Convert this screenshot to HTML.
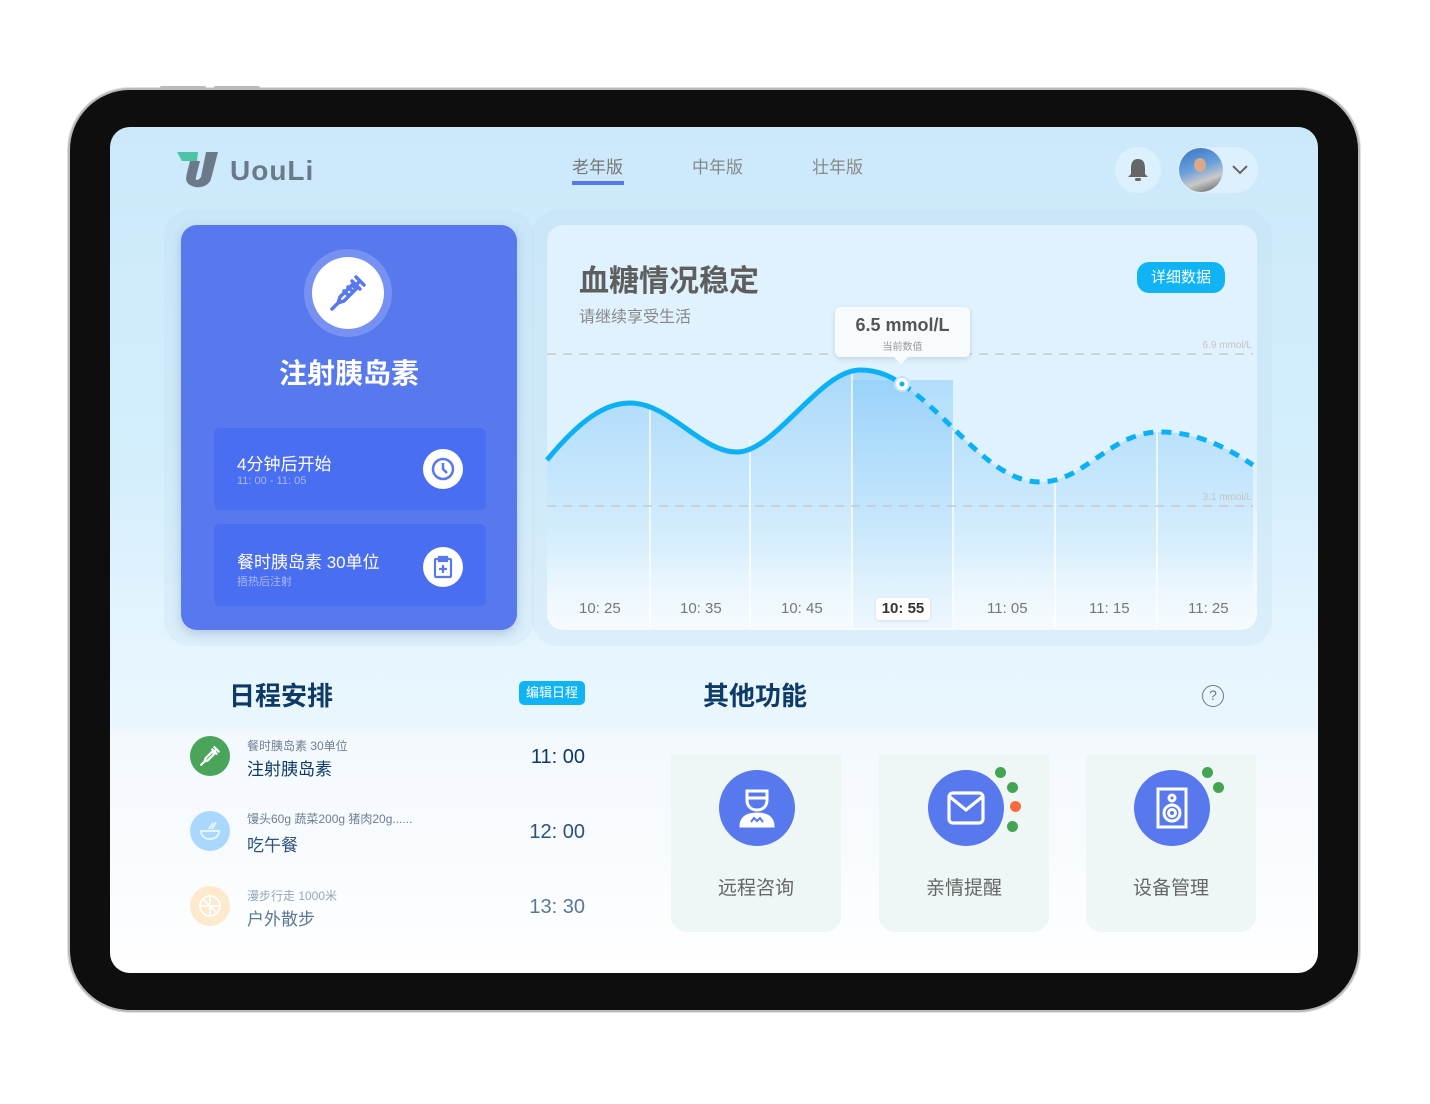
<!DOCTYPE html>
<html><head><meta charset="utf-8">
<style>
*{margin:0;padding:0;box-sizing:border-box}
body{width:1430px;height:1104px;background:#fff;position:relative;overflow:hidden;font-family:"Liberation Sans","Noto Sans CJK SC",sans-serif}
.abs{position:absolute}
.frame{left:68px;top:88px;width:1292px;height:924px;border-radius:62px;background:#0e0e0e;border:2px solid #b9b9b9;box-shadow:0 0 0 1px #e0e0e0}
.screen{left:110px;top:127px;width:1208px;height:846px;border-radius:20px;overflow:hidden;background:linear-gradient(#cbe9fb 0%,#d4eefc 40%,#e6f5fe 62%,#eaf6fe 71%,#f4f9fe 72%,#f8fbfe 85%,#fff 100%)}
.t{position:absolute;white-space:nowrap}
</style></head><body>
<div class="abs frame"></div>
<div class="abs" style="left:160px;top:86px;width:46px;height:3px;background:#bbb;border-radius:2px"></div>
<div class="abs" style="left:214px;top:86px;width:46px;height:3px;background:#bbb;border-radius:2px"></div>
<div class="abs screen"></div>

<svg class="abs" style="left:176px;top:151px" width="44" height="38" viewBox="0 0 44 38">
<path d="M1 1 H22 L21 10 H6 Z" fill="#4fc3a6"/>
<path d="M14 10 H24 L20 26 C19 30 22 30 25 26 L30 1 H42 L35 28 C32 37 20 38 14 34 C9 31 10 26 11 22 Z" fill="#6b7a8a"/>
</svg>
<div class="t" style="left:230px;top:155px;font-size:28px;font-weight:bold;color:#6b7a8a;letter-spacing:1px">UouLi</div>

<div class="t" style="left:572px;top:153px;font-size:17px;color:#777">老年版</div>
<div class="abs" style="left:572px;top:181px;width:52px;height:4px;background:#5878ee"></div>
<div class="t" style="left:692px;top:153px;font-size:17px;color:#888">中年版</div>
<div class="t" style="left:812px;top:153px;font-size:17px;color:#888">壮年版</div>

<div class="abs" style="left:1115px;top:147px;width:46px;height:46px;border-radius:50%;background:#ddf0fd"></div>
<svg class="abs" style="left:1126px;top:157px" width="24" height="26" viewBox="0 0 24 26"><path d="M12 2 C6 2 5 7 5 12 L5 17 L2 20 H22 L19 17 L19 12 C19 7 18 2 12 2Z" fill="#666"/><rect x="9" y="21" width="6" height="3" rx="1.5" fill="#666"/></svg>
<div class="abs" style="left:1178px;top:147px;width:80px;height:46px;border-radius:23px;background:#ddf0fd"></div>
<div class="abs" style="left:1179px;top:148px;width:44px;height:44px;border-radius:50%;background:linear-gradient(160deg,#3a74c4,#6aa0dc 45%,#c9c9c9 70%,#555)"></div>
<div class="abs" style="left:1194px;top:158px;width:12px;height:14px;border-radius:50%;background:#d9a98a"></div>
<svg class="abs" style="left:1231px;top:163px" width="18" height="12"><path d="M2 3 L9 10 L16 3" stroke="#666" stroke-width="2" fill="none"/></svg>

<div class="abs" style="left:164px;top:210px;width:370px;height:436px;border-radius:26px;background:rgba(190,220,240,.25)"></div>
<div class="abs" style="left:181px;top:225px;width:336px;height:405px;border-radius:16px;background:#5878ee;box-shadow:0 4px 10px rgba(60,90,160,.25)"></div>
<div class="abs" style="left:304px;top:249px;width:88px;height:88px;border-radius:50%;background:#7791f2"></div>
<div class="abs" style="left:312px;top:257px;width:72px;height:72px;border-radius:50%;background:#fff"></div>
<svg class="abs" style="left:328px;top:273px" width="40" height="40" viewBox="0 0 40 40" fill="none" stroke="#5878ee" stroke-width="3.5" stroke-linecap="round"><path d="M28 4 L36 12 M32 8 L26 14 M24 8 L32 16 M26 10 L12 24 L10 30 L16 28 L30 14 M12 28 L4 36 M16 18 L20 22 M20 14 L24 18"/></svg>
<div class="t" style="left:181px;width:336px;text-align:center;top:352px;font-size:28px;font-weight:bold;color:#fff">注射胰岛素</div>

<div class="abs" style="left:214px;top:428px;width:272px;height:82px;border-radius:6px;background:#4a6ef2"></div>
<div class="t" style="left:237px;top:450px;font-size:17px;color:#fff">4分钟后开始</div>
<div class="t" style="left:237px;top:475px;font-size:11px;color:#a9b9f5">11: 00 - 11: 05</div>
<div class="abs" style="left:423px;top:449px;width:40px;height:40px;border-radius:50%;background:#fff"></div>
<svg class="abs" style="left:431px;top:457px" width="24" height="24" viewBox="0 0 24 24" fill="none" stroke="#5878ee" stroke-width="2.5"><circle cx="12" cy="12" r="10"/><path d="M12 6 V12 L16 16"/></svg>

<div class="abs" style="left:214px;top:524px;width:272px;height:82px;border-radius:6px;background:#4a6ef2"></div>
<div class="t" style="left:237px;top:548px;font-size:17px;color:#fff">餐时胰岛素 30单位</div>
<div class="t" style="left:237px;top:573px;font-size:11px;color:#a9b9f5">捂热后注射</div>
<div class="abs" style="left:423px;top:547px;width:40px;height:40px;border-radius:50%;background:#fff"></div>
<svg class="abs" style="left:431px;top:555px" width="24" height="24" viewBox="0 0 24 24" fill="none" stroke="#5878ee" stroke-width="2.2"><rect x="4" y="4" width="16" height="18" rx="1"/><rect x="8" y="2" width="8" height="4" fill="#5878ee"/><path d="M12 10 V18 M8 14 H16"/></svg>

<div class="abs" style="left:532px;top:210px;width:740px;height:436px;border-radius:26px;background:rgba(190,220,240,.25)"></div>
<div class="abs" style="left:547px;top:225px;width:710px;height:405px;border-radius:16px;background:linear-gradient(#dff2fd 0%,#dff2fd 65%,#eef8fe 80%,#f5fafe 100%);overflow:hidden"></div>
<div class="t" style="left:579px;top:256px;font-size:30px;font-weight:bold;color:#5e5e5e">血糖情况稳定</div>
<div class="t" style="left:579px;top:303px;font-size:16px;color:#888">请继续享受生活</div>
<div class="abs" style="left:1137px;top:262px;width:88px;height:31px;border-radius:12px;background:#10b4f5;color:#fff;font-size:15px;text-align:center;line-height:31px">详细数据</div>

<svg class="abs" style="left:0;top:0" width="1430" height="1104">
<defs>
<linearGradient id="f" x1="0" y1="0" x2="0" y2="1"><stop offset="0" stop-color="#a8d8fa"/><stop offset="0.7" stop-color="#cbe9fc" stop-opacity=".6"/><stop offset="1" stop-color="#f3f9fe" stop-opacity="0"/></linearGradient>
<linearGradient id="h" x1="0" y1="0" x2="0" y2="1"><stop offset="0" stop-color="#8ccdfa"/><stop offset="1" stop-color="#e6f4fd"/></linearGradient>
</defs>
<path d="M547,460 C580,420 605,403 630,403 C670,403 700,452 737,452 C775,452 820,370 860,370 C880,370 893,378 902,384 C950,415 990,482 1040,482 C1085,482 1110,432 1160,432 C1200,432 1230,450 1253,465 L1253,628 L547,628 Z" fill="url(#f)"/>
<rect x="852" y="380" width="101" height="248" fill="url(#h)" opacity=".55"/>
<g stroke="#fff" stroke-width="1.5" opacity=".9"><line x1="650" y1="405" x2="650" y2="628"/><line x1="750" y1="440" x2="750" y2="628"/><line x1="852" y1="372" x2="852" y2="628"/><line x1="953" y1="430" x2="953" y2="628"/><line x1="1055" y1="475" x2="1055" y2="628"/><line x1="1157" y1="432" x2="1157" y2="628"/></g>
<g stroke="#c4c4c4" stroke-width="1.2" stroke-dasharray="9 7"><line x1="547" y1="354" x2="1253" y2="354"/><line x1="547" y1="506" x2="1253" y2="506"/></g>
<text x="1252" y="348" font-size="10" fill="#c4c4c4" text-anchor="end" font-family="Liberation Sans">6.9 mmol/L</text>
<text x="1252" y="500" font-size="10" fill="#c4c4c4" text-anchor="end" font-family="Liberation Sans">3.1 mmol/L</text>
<path d="M547,460 C580,420 605,403 630,403 C670,403 700,452 737,452 C775,452 820,370 860,370 C880,370 893,378 902,384" stroke="#0cb1f5" stroke-width="5" fill="none"/>
<path d="M902,384 C950,415 990,482 1040,482 C1085,482 1110,432 1160,432 C1200,432 1230,450 1253,465" stroke="#0cb1f5" stroke-width="5" fill="none" stroke-dasharray="10 8"/>
<circle cx="902" cy="384" r="7" fill="#fff" stroke="#bfe6fb" stroke-width="2"/><circle cx="902" cy="384" r="2.5" fill="#0cb1f5"/>
</svg>
<div class="abs" style="left:835px;top:307px;width:135px;height:50px;background:#f7fbfe;border-radius:5px;box-shadow:0 2px 6px rgba(0,0,0,.12)"></div>
<div class="abs" style="left:896px;top:352px;width:10px;height:10px;background:#f7fbfe;transform:rotate(45deg)"></div>
<div class="t" style="left:835px;width:135px;text-align:center;top:315px;font-size:18px;font-weight:bold;color:#555">6.5 mmol/L</div>
<div class="t" style="left:835px;width:135px;text-align:center;top:338px;font-size:10px;color:#999">当前数值</div>
<div class="t" style="left:579px;top:600px;font-size:15px;color:#777">10: 25</div>
<div class="t" style="left:680px;top:600px;font-size:15px;color:#777">10: 35</div>
<div class="t" style="left:781px;top:600px;font-size:15px;color:#777">10: 45</div>
<div class="abs" style="left:876px;top:598px;width:54px;height:22px;background:#fff;border-radius:3px;box-shadow:0 1px 3px rgba(0,0,0,.1)"></div>
<div class="t" style="left:876px;width:54px;text-align:center;top:600px;font-size:15px;font-weight:bold;color:#333">10: 55</div>
<div class="t" style="left:987px;top:600px;font-size:15px;color:#777">11: 05</div>
<div class="t" style="left:1089px;top:600px;font-size:15px;color:#777">11: 15</div>
<div class="t" style="left:1188px;top:600px;font-size:15px;color:#777">11: 25</div>

<div class="t" style="left:229px;top:676px;font-size:26px;font-weight:bold;color:#0d3a66">日程安排</div>
<div class="abs" style="left:519px;top:681px;width:66px;height:24px;border-radius:5px;background:#10b4f5;color:#fff;font-size:13px;text-align:center;line-height:24px">编辑日程</div>

<div class="abs" style="left:190px;top:736px;width:40px;height:40px;border-radius:50%;background:#4aa45a"></div>
<svg class="abs" style="left:199px;top:745px" width="22" height="22" viewBox="0 0 40 40" fill="none" stroke="#fff" stroke-width="4" stroke-linecap="round"><path d="M28 4 L36 12 M32 8 L26 14 M24 8 L32 16 M26 10 L12 24 L10 30 L16 28 L30 14 M12 28 L4 36"/></svg>
<div class="t" style="left:247px;top:737px;font-size:12px;color:#6d7f93">餐时胰岛素 30单位</div>
<div class="t" style="left:247px;top:755px;font-size:17px;color:#0d3a66">注射胰岛素</div>
<div class="t" style="right:845px;top:746px;font-size:20px;color:#0d3a66">11: 00</div>

<div class="abs" style="left:190px;top:811px;width:40px;height:40px;border-radius:50%;background:#a9d8fc"></div>
<svg class="abs" style="left:198px;top:819px" width="24" height="24" viewBox="0 0 24 24" fill="none" stroke="#e6f4fe" stroke-width="2"><path d="M3 12 H21 C21 17 17 20 12 20 C7 20 3 17 3 12Z M14 10 L18 3 M11 10 L15 4"/></svg>
<div class="t" style="left:247px;top:810px;font-size:12px;color:#6d7f93">馒头60g 蔬菜200g 猪肉20g......</div>
<div class="t" style="left:247px;top:831px;font-size:17px;color:#2d5378">吃午餐</div>
<div class="t" style="right:845px;top:821px;font-size:20px;color:#2d5378">12: 00</div>

<div class="abs" style="left:190px;top:886px;width:40px;height:40px;border-radius:50%;background:#fde9cc"></div>
<svg class="abs" style="left:198px;top:894px" width="24" height="24" viewBox="0 0 24 24" fill="none" stroke="#fff" stroke-width="1.8"><circle cx="12" cy="12" r="10"/><path d="M2 12 H22 M12 2 V22 M5 5 L19 19"/></svg>
<div class="t" style="left:247px;top:887px;font-size:12px;color:#97a7b7">漫步行走 1000米</div>
<div class="t" style="left:247px;top:905px;font-size:17px;color:#5a7896">户外散步</div>
<div class="t" style="right:845px;top:896px;font-size:20px;color:#5a7896">13: 30</div>

<div class="t" style="left:703px;top:676px;font-size:26px;font-weight:bold;color:#0d3a66">其他功能</div>
<div class="abs" style="left:1202px;top:685px;width:22px;height:22px;border-radius:50%;border:1.5px solid #777;color:#777;font-size:14px;text-align:center;line-height:19px">?</div>

<div class="abs" style="left:671px;top:755px;width:170px;height:177px;border-radius:0 0 16px 16px;background:#eef6f6"></div>
<div class="abs" style="left:879px;top:755px;width:170px;height:177px;border-radius:0 0 16px 16px;background:#eef6f6"></div>
<div class="abs" style="left:1086px;top:755px;width:170px;height:177px;border-radius:0 0 16px 16px;background:#eef6f6"></div>

<div class="abs" style="left:719px;top:770px;width:76px;height:76px;border-radius:50%;background:#5878ee"></div>
<svg class="abs" style="left:737px;top:788px" width="40" height="40" viewBox="0 0 40 40" fill="none" stroke="#fff" stroke-width="3"><path d="M10 3 H30 V12 C30 18 26 22 20 22 C14 22 10 18 10 12 Z M10 10 H30"/><path d="M4 38 C4 30 10 26 20 26 C30 26 36 30 36 38 Z" fill="#fff"/><path d="M14 34 L17 30 L20 33 L23 30 L26 34" stroke="#5878ee" stroke-width="2"/></svg>
<div class="t" style="left:671px;width:170px;text-align:center;top:873px;font-size:19px;color:#666">远程咨询</div>

<div class="abs" style="left:928px;top:770px;width:76px;height:76px;border-radius:50%;background:#5878ee"></div>
<svg class="abs" style="left:946px;top:790px" width="40" height="36" viewBox="0 0 40 36" fill="none" stroke="#fff" stroke-width="3.2"><rect x="3" y="3" width="34" height="30" rx="4"/><path d="M4 7 L20 20 L36 7"/></svg>
<div class="abs" style="left:995px;top:767px;width:11px;height:11px;border-radius:50%;background:#43a552"></div>
<div class="abs" style="left:1007px;top:782px;width:11px;height:11px;border-radius:50%;background:#43a552"></div>
<div class="abs" style="left:1010px;top:801px;width:11px;height:11px;border-radius:50%;background:#fa6a3c"></div>
<div class="abs" style="left:1007px;top:821px;width:11px;height:11px;border-radius:50%;background:#43a552"></div>
<div class="t" style="left:879px;width:170px;text-align:center;top:873px;font-size:19px;color:#666">亲情提醒</div>

<div class="abs" style="left:1134px;top:770px;width:76px;height:76px;border-radius:50%;background:#5878ee"></div>
<svg class="abs" style="left:1156px;top:787px" width="32" height="42" viewBox="0 0 32 42" fill="none" stroke="#fff" stroke-width="3"><rect x="2" y="2" width="28" height="38"/><circle cx="16" cy="11" r="3"/><circle cx="16" cy="26" r="8"/><circle cx="16" cy="26" r="3.5"/></svg>
<div class="abs" style="left:1202px;top:767px;width:11px;height:11px;border-radius:50%;background:#43a552"></div>
<div class="abs" style="left:1213px;top:782px;width:11px;height:11px;border-radius:50%;background:#43a552"></div>
<div class="t" style="left:1086px;width:170px;text-align:center;top:873px;font-size:19px;color:#666">设备管理</div>
</body></html>
